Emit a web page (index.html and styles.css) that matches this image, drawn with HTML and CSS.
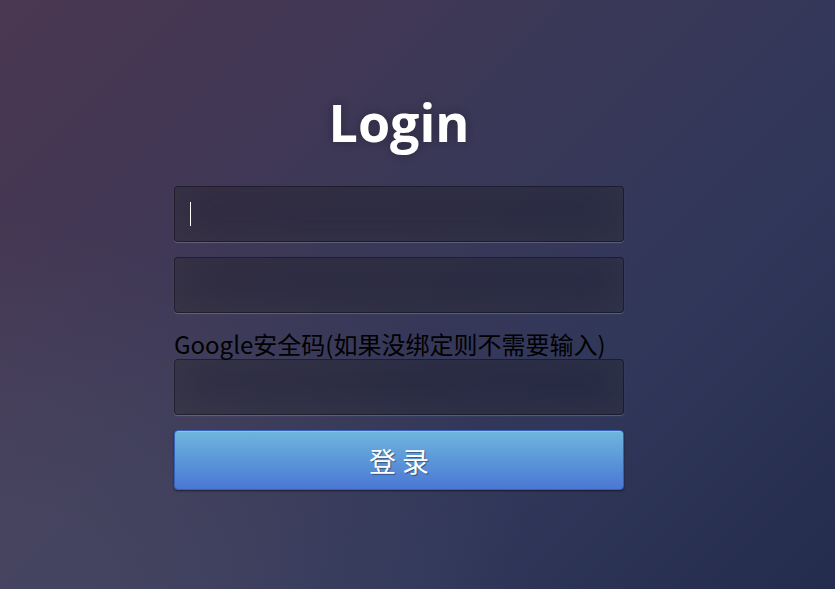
FILE: index.html
```html
<!DOCTYPE html>
<html lang="zh">
<head>
<meta charset="utf-8">
<title>Login</title>
<link rel="stylesheet" href="styles.css">
</head>
<body>
<div class="login">
  <h1 class="title">Login</h1>
  <form class="form">
    <div class="field">
      <input class="input" type="text" name="u">
      <span class="caret"></span>
    </div>
    <div class="field">
      <input class="input" type="password" name="p">
    </div>
    <label class="label">Google安全码(如果没绑定则不需要输入)</label>
    <div class="field">
      <input class="input" type="text" name="g">
    </div>
    <button class="btn" type="button">登 录</button>
  </form>
</div>
</body>
</html>
```

FILE: styles.css
```css
* { box-sizing: border-box; }
html, body { margin: 0; height: 100%; }
body {
  width: 835px;
  height: 589px;
  overflow: hidden;
  font-family: "Open Sans", "Noto Sans CJK SC", sans-serif;
  background:
    radial-gradient(ellipse at 0% 100%, rgba(90, 90, 110, 0.35) 10%, rgba(90, 90, 110, 0) 45%),
    linear-gradient(135deg, #4b3751 0%, #3b3857 40%, #30375a 70%, #242c4d 100%);
}
.login {
  width: 450px;
  margin-left: 174px;
  padding-top: 85px;
  display: flex;
  flex-direction: column;
}
.title {
  margin: 0 0 28px;
  text-align: center;
  color: #fff;
  font-family: "Open Sans", sans-serif;
  font-weight: 700;
  font-size: 52px;
  line-height: 73px;
  text-shadow: 0 0 10px rgba(0, 0, 0, 0.3);
}
.form { display: flex; flex-direction: column; }
.field { position: relative; margin-bottom: 15px; }
.input {
  display: block;
  width: 450px;
  height: 56px;
  padding: 10px 16px;
  margin: 0;
  font-size: 16px;
  color: #fff;
  background: rgba(0, 0, 0, 0.25);
  border: 1px solid rgba(0, 0, 0, 0.3);
  border-radius: 4px;
  outline: none;
  box-shadow: inset 0 -5px 45px rgba(100, 100, 100, 0.2), 0 1px 1px rgba(255, 255, 255, 0.2);
}
.caret {
  position: absolute;
  left: 16px;
  top: 16px;
  width: 1px;
  height: 24px;
  background: #fff;
}
.label {
  height: 31px;
  line-height: 31px;
  font-family: "Noto Sans CJK SC", sans-serif;
  font-size: 24px;
  color: #000;
  white-space: nowrap;
}
.btn {
  width: 450px;
  height: 60px;
  padding: 0;
  border: 1px solid #3762bc;
  border-radius: 4px;
  background: linear-gradient(to bottom, #6eb6de, #4a77d4);
  color: #fff;
  font-family: "Noto Sans CJK SC", sans-serif;
  font-size: 27px;
  text-shadow: 1px 1px 1px rgba(0, 0, 0, 0.4);
  box-shadow: inset 0 1px 0 rgba(255, 255, 255, 0.2), 0 1px 2px rgba(0, 0, 0, 0.5);
}
```
